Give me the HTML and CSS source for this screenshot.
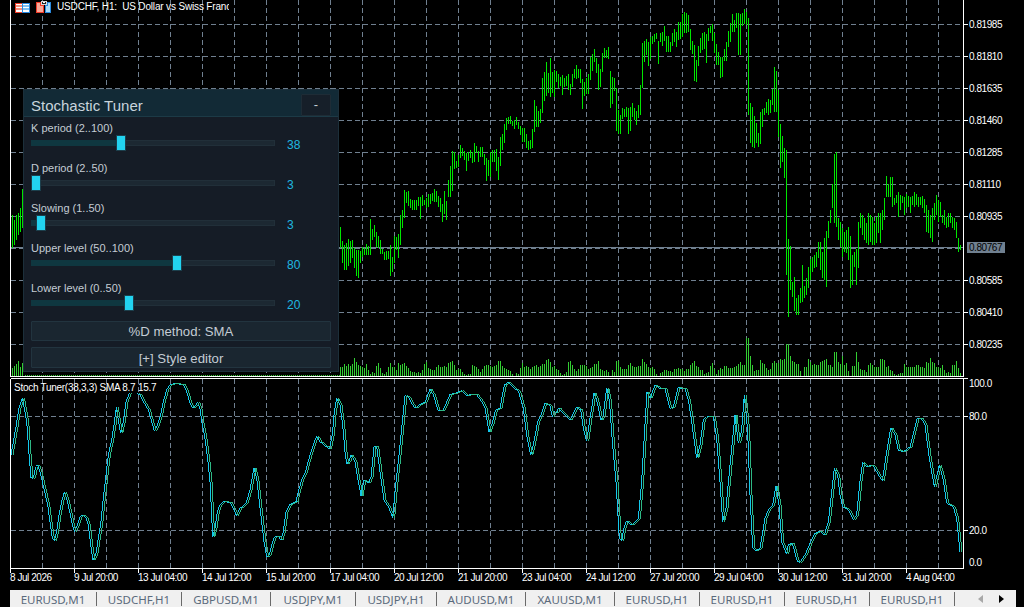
FILE: index.html
```html
<!DOCTYPE html>
<html lang="en">
<head>
<meta charset="utf-8">
<title>USDCHF,H1</title>
<link rel="stylesheet" href="styles.css">
</head>
<body>
<div class="terminal">
  <div class="chart">
    <svg class="chart-svg" width="1024" height="590" viewBox="0 0 1024 590" xmlns="http://www.w3.org/2000/svg">
      <defs>
        <clipPath id="title-clip"><rect x="50" y="0" width="179" height="16"/></clipPath>
        <g id="stoch">
          <path transform="matrix(.3333 0 0 .3333 0 375)" d="M33 240L40 200 48 155 57 100 67 68 73 100 80 140 87 235 93 308 100 310 107 275 113 270 120 290 127 320 135 355 143 390 150 440 157 490 163 497 170 470 178 415 185 380 193 352 200 370 208 405 215 440 223 470 232 450 240 425 248 420 258 430 265 450 272 510 279 555 287 540 295 490 303 440 310 370 318 300 325 240 335 195 342 150 349 97 355 135 362 175 370 140 378 80 388 55M412 55L420 60 430 80 445 105 455 140 463 168 472 150 482 120 490 80 500 45 510 30 522 26 550 28 560 50 570 85 578 100 587 92 593 80 600 100 607 150 615 190 623 250 630 320 635 420 638 487 645 460 652 410 660 390 670 380 690 382 700 400 709 422 720 400 738 385 750 345 762 278 770 310 778 380 785 440 792 500 800 545 808 540 815 510 823 487 835 483 843 495 850 470 858 410 868 390 888 380 895 350 905 315 915 295 930 240 942 205 950 183 960 200 975 212 988 222 997 180 1003 110 1010 70 1020 90"/>
          <path transform="matrix(.3333 0 0 .3333 340 375)" d="M0 90L8 150 15 230 20 268 28 255 33 240 45 260 55 320 63 362 72 315 85 325 93 305 102 215 110 215 120 290 132 375 145 395 158 428 165 350 175 260 185 160 195 62 205 65 215 85 225 100 240 88 255 82 270 42 280 60 295 108 310 105 330 58 345 55 365 47 380 62 395 58 410 60 425 80 435 100 447 172 458 140 467 105 480 100 493 30 505 22 520 38 535 48 550 100 560 180 572 240 582 200 593 140 605 115 615 85 630 92 637 125 643 108 650 115 655 98 670 115 690 135 710 95 722 105 730 160 740 198 750 130 762 55 770 75 783 135 790 120 800 38 808 75 818 210 828 320 838 490 845 497 852 460 860 437 875 450 885 440 895 430 905 320 915 150 921 50 930 70 945 30 960 40 975 42 990 100 1000 95 1015 35 1020 40"/>
          <path transform="matrix(.3333 0 0 .3333 680 375)" d="M0 40L15 42 25 75 35 140 50 250 60 210 70 135 80 125 100 125 110 190 120 320 128 440 138 400 150 270 165 120 175 205 185 165 193 60 203 170 210 360 218 520 228 528 240 520 255 430 265 405 278 390 288 332 297 390 305 500 320 538 325 508 337 505 352 560 360 562 375 540 390 505 405 475 420 468 433 480 445 440 463 280 473 300 480 360 488 395 505 405 520 435 530 420 540 320 548 262 560 275 578 270 590 290 607 318 620 230 632 158 645 180 655 225 670 230 690 215 700 175 712 130 725 132 735 150 748 250 763 335 778 270 790 315 800 385 820 395 830 430 840 530"/>
        </g>
      </defs>

      <!-- grid, main pane -->
      <path class="grid" d="M11 24.5H963M11 56.5H963M11 88.5H963M11 120.5H963M11 152.5H963M11 184.5H963M11 216.5H963M11 248.5H963M11 280.5H963M11 312.5H963M11 344.5H963"/>
      <path class="grid" d="M42.5 0V376M74.5 0V376M106.5 0V376M138.5 0V376M170.5 0V376M202.5 0V376M234.5 0V376M266.5 0V376M298.5 0V376M330.5 0V376M362.5 0V376M394.5 0V376M426.5 0V376M458.5 0V376M490.5 0V376M522.5 0V376M554.5 0V376M586.5 0V376M618.5 0V376M650.5 0V376M682.5 0V376M714.5 0V376M746.5 0V376M778.5 0V376M810.5 0V376M842.5 0V376M874.5 0V376M906.5 0V376M938.5 0V376"/>
      <path class="price-line" d="M11 247.5H963"/>

      <!-- volumes -->
      <g transform="translate(.5 0)">
        <path class="volume" d="M12 376v-8m2 8v-10m2 10v-12m2 12v-15m2 15v-9m2 9v-13"/>
        <path class="volume" d="M340 376v-9m2 9v-9m2 9v-12m2 12v-10m2 10v-12m2 12v-10m2 10v-12m2 12v-18m2 18v-14m2 14v-11m2 11v-10m2 10v-9m2 9v-8m2 8v-12m2 12v-6m2 6v-2m2 2v-4m2 4v-3m2 3v-10m2 10v-13m2 13v-8m2 8v-3m2 3v-2m2 2v-4m2 4v-9m2 9v-13m2 13v-9m2 9v-9m2 9v-6m2 6v-13m2 13v-11m2 11v-12m2 12v-13m2 13v-10m2 10v-8m2 8v-5m2 5v-4m2 4v-4m2 4v-3m2 3v-4m2 4v-3m2 3v-6m2 6v-12m2 12v-14m2 14v-8m2 8v-7m2 7v-6m2 6v-6m2 6v-9m2 9v-11m2 11v-9m2 9v-9m2 9v-10m2 10v-9m2 9v-13m2 13v-14m2 14v-15m2 15v-11m2 11v-6m2 6v-7m2 7v-7m2 7v-4m2 4v-2m2 2v-1m2 1v-2m2 2v-2m2 2v-11m2 11v-10m2 10v-9m2 9v-7m2 7v-4m2 4v-7m2 7v-10m2 10v-11m2 11v-11m2 11v-10m2 10v-9m2 9v-10m2 10v-11m2 11v-15m2 15v-15m2 15v-10m2 10v-8m2 8v-7m2 7v-6m2 6v-5m2 5v-2m4 2v-3m2 3v-2m2 2v-8m2 8v-13m2 13v-9m2 9v-10m2 10v-9m2 9v-7m2 7v-9m2 9v-10m2 10v-11m2 11v-9m2 9v-10m2 10v-12m2 12v-12m2 12v-16m2 16v-17m2 17v-14m2 14v-9m2 9v-10m2 10v-7m2 7v-6m2 6v-3m2 3v-1m2 1v-2m2 2v-4m2 4v-14m2 14v-15m2 15v-11m2 11v-7m2 7v-5m2 5v-7m2 7v-11m2 11v-11m2 11v-11m2 11v-10m2 10v-7m2 7v-8m2 8v-9m2 9v-12m2 12v-12m2 12v-15m2 15v-7m2 7v-6m2 6v-5m2 5v-6m2 6v-4m4 4v-6m2 6v-4m2 4v-15m2 15v-15m2 15v-9m2 9v-7m2 7v-7m2 7v-7m2 7v-11m2 11v-13m2 13v-10m2 10v-9m2 9v-9m2 9v-10m2 10v-10m2 10v-17m2 17v-14m2 14v-12m2 12v-9m2 9v-8m2 8v-9m2 9v-7m2 7v-2m4 2v-3m2 3v-4m2 4v-6m2 6v-6m2 6v-5m2 5v-5m2 5v-4m2 4v-7m2 7v-7m2 7v-8m2 8v-7m2 7v-7m2 7v-5m2 5v-7m2 7v-7m2 7v-11m2 11v-13m2 13v-15m2 15v-10m2 10v-9"/>
        <path class="volume" d="M700 376v-6m2 6v-6m2 6v-2m2 2v-3m2 3v-4m2 4v-10m2 10v-13m2 13v-7m2 7v-2m2 2v-6m2 6v-8m2 8v-7m2 7v-10m2 10v-10m2 10v-8m2 8v-8m2 8v-8m2 8v-9m2 9v-10m2 10v-12m2 12v-14m2 14v-11m2 11v-11m2 11v-38m2 38v-38m2 38v-20m2 20v-11m2 11v-5m2 5v-6m2 6v-6m2 6v-16m2 16v-13m2 13v-12m2 12v-8m2 8v-6m2 6v-7m2 7v-13m2 13v-15m2 15v-13m2 13v-13m2 13v-17m2 17v-16m2 16v-17m2 17v-32m2 32v-32m2 32v-20m2 20v-15m2 15v-14m2 14v-12m2 12v-12m2 12v-5m4 5v-9m2 9v-9m2 9v-17m2 17v-14m2 14v-11m2 11v-12m2 12v-11m2 11v-11m2 11v-14m2 14v-15m2 15v-16m2 16v-17m2 17v-11m2 11v-11m2 11v-9m2 9v-24m2 24v-24m2 24v-14m2 14v-12m2 12v-20m2 20v-11m2 11v-13m2 13v-5m4 5v-10m2 10v-10m2 10v-24m2 24v-14m2 14v-7m2 7v-6m2 6v-6m2 6v-4m2 4v-11m2 11v-13m2 13v-11m2 11v-9m2 9v-9m2 9v-9m2 9v-17m2 17v-17m2 17v-16m2 16v-9m2 9v-10m2 10v-6m2 6v-5m2 5v-2m2 2v-1m2 1v-2m2 2v-3m2 3v-3m2 3v-12m2 12v-9m2 9v-9m2 9v-9m2 9v-9m2 9v-9m2 9v-11m2 11v-11m2 11v-9m2 9v-9m2 9v-8m2 8v-14m2 14v-13m2 13v-18m2 18v-14m2 14v-13m2 13v-9m2 9v-9m2 9v-8m2 8v-11m2 11v-6m2 6v-3m2 3v-4m2 4v-3m2 3v-11m2 11v-11m2 11v-15m2 15v-8m2 8v-3"/>
        <path class="volume-tips" d="M339 375.5H24"/>

        <!-- price bars -->
        <path class="bars" d="M12 215V248M14 220V245M16 215V240M18 213V235M20 208V232M22 189V228
M340 227V248M342 241V263M344 245V270M346 243V270M348 239V266M350 241V263M352 240V258M354 248V268M356 250V276M358 250V278M360 251V263M362 247V257M364 248V255M366 244V255M368 246V255M370 219V255M372 229V240M374 225V237M376 232V247M378 236V248M380 240V254M382 249V254M384 252V260M386 251V260M388 251V259M390 245V276M392 257V272M394 236V263M396 237V250M398 234V258M400 215V245M402 210V228M404 190V218M406 192V203M408 191V206M410 199V208M412 200V210M414 200V210M416 200V210M418 197V206M420 197V219M422 195V206M424 200V205M426 198V208M428 194V207M430 194V204M432 193V201M434 189V202M436 191V202M438 196V207M440 198V212M442 204V222M444 191V214M446 201V220M448 180V197M450 166V197M452 151V191M454 152V169M456 161V168M458 155V167M460 145V158M462 148V156M464 151V160M466 153V171M468 152V161M470 150V158M472 152V163M474 143V162M476 146V153M478 151V162M480 147V157M482 147V157M484 154V165M486 158V181M488 160V176M490 152V177M492 150V162M494 150V162M496 149V171M498 157V180M500 137V166M502 134V150M504 124V143M506 118V130M508 117V124M510 116V124M512 121V126M514 120V129M516 117V125M518 122V129M520 126V135M522 128V142M524 128V142M526 134V148M528 141V150M530 140V149M532 129V148M534 100V132M536 106V127M538 111V127M540 109V123M542 78V113M544 72V101M546 62V96M548 73V93M550 58V97M552 72V93M554 70V97M556 71V82M558 74V88M560 77V86M562 75V95M564 78V87M566 76V86M568 74V90M570 84V95M572 74V87M574 69V78M576 65V79M578 69V78M580 69V83M582 79V109M584 82V96M586 78V94M588 74V94M590 57V80M592 54V71M594 49V62M596 58V73M598 64V90M600 69V87M602 53V72M604 48V58M606 50V58M608 47V59M610 71V108M612 77V104M614 78V91M616 88V131M618 110V134M620 115V134M622 108V119M624 109V117M626 107V117M628 108V134M630 107V131M632 103V117M634 108V120M636 111V125M638 105V118M640 85V115M642 43V88M644 41V62M646 39V55M648 42V66M650 37V59M652 36V44M654 34V42M656 33V39M658 41V64M660 33V42M662 32V46M664 26V41M666 36V52M668 36V52M670 42V52M672 33V46M674 29V42M676 32V47M678 22V40M680 22V39M682 14V37M684 12V33M686 13V33M688 15V32M690 29V50M692 41V54M694 45V81M696 60V82M698 46V66
M700 38V53M702 33V50M704 32V49M706 34V63M708 28V41M710 26V33M712 24V41M714 33V53M716 44V65M718 52V65M720 57V78M722 57V77M724 49V61M726 42V61M728 31V47M730 23V42M732 14V32M734 20V32M736 13V28M738 13V55M740 14V55M742 13V26M744 9V24M746 12V25M748 18V115M750 103V143M752 107V147M754 116V148M756 123V143M758 133V147M760 112V144M762 109V127M764 108V115M766 102V113M768 99V115M770 100V113M772 89V105M774 67V112M776 71V112M778 90V137M780 124V168M782 136V162M784 148V178M786 150V275M788 239V317M790 246V290M792 282V297M794 277V311M796 298V315M798 295V315M800 288V303M802 265V302M804 286V298M806 278V295M808 267V288M810 259V280M812 257V272M814 255V268M816 252V267M818 242V258M820 242V270M822 252V278M824 238V280M826 231V287M828 221V238M830 210V223M832 184V208M834 154V223M836 152V227M838 218V240M840 222V247M842 228V257M844 232V252M846 230V253M848 227V260M850 236V288M852 255V285M854 252V267M856 249V285M858 222V268M860 213V228M862 215V235M864 218V240M866 223V243M868 213V245M870 215V242M872 217V245M874 223V245M876 217V243M878 213V233M880 213V243M882 210V230M884 198V220M886 176V197M888 184V197M890 177V197M892 177V207M894 198V205M896 195V203M898 192V217M900 195V210M902 196V203M904 197V215M906 194V208M908 196V207M910 197V213M912 196V205M914 192V207M916 194V205M918 197V207M920 197V205M922 196V208M924 199V213M926 205V232M928 210V233M930 215V238M932 208V242M934 203V220M936 195V215M938 200V222M940 202V217M942 215V223M944 210V225M946 217V228M948 213V227M950 213V223M952 217V228M954 218V230M956 222V238M958 238V252M960 245V250"/>
      </g>

      <!-- grid and levels, indicator pane -->
      <path class="grid" d="M11 416.5H963M11 530.5H963"/>
      <path class="grid" d="M42.5 379V568M74.5 379V568M106.5 379V568M138.5 379V568M170.5 379V568M202.5 379V568M234.5 379V568M266.5 379V568M298.5 379V568M330.5 379V568M362.5 379V568M394.5 379V568M426.5 379V568M458.5 379V568M490.5 379V568M522.5 379V568M554.5 379V568M586.5 379V568M618.5 379V568M650.5 379V568M682.5 379V568M714.5 379V568M746.5 379V568M778.5 379V568M810.5 379V568M842.5 379V568M874.5 379V568M906.5 379V568M938.5 379V568"/>

      <use href="#stoch" class="stoch-k"/>
      <use href="#stoch" class="stoch-d" transform="translate(2 0)"/>

      <!-- frames and axis ticks -->
      <path class="frame" d="M10.5 0V376.5H963.5V0M10.5 378.5H968M10.5 378.5V568.5H963.5V378.5"/>
      <path class="frame" d="M964 24.5h4M964 56.5h4M964 88.5h4M964 120.5h4M964 152.5h4M964 184.5h4M964 216.5h4M964 280.5h4M964 312.5h4M964 344.5h4M964 416.5h4M964 530.5h4M74.5 568v5M138.5 568v5M202.5 568v5M266.5 568v5M330.5 568v5M394.5 568v5M458.5 568v5M522.5 568v5M586.5 568v5M650.5 568v5M714.5 568v5M778.5 568v5M842.5 568v5M906.5 568v5M10.5 568v5"/>

      <!-- header icons and symbol title -->
      <g class="icon-table">
        <path class="ic-red-cell" d="M15.5 3.5h7v9h-7z"/>
        <path class="ic-blue-cell" d="M22.5 3.5h7v9h-7z"/>
        <path class="ic-red-row" d="M16 5.5h6M16 8.5h6"/>
        <path class="ic-blue-row" d="M23 5.5h6M23 8.5h6"/>
      </g>
      <g class="icon-split">
        <path class="ic-red-fill" d="M36.5 2.5h4v3h3v7h-7z"/>
        <path class="ic-blue-fill" d="M45.5 5.5h2v-3h3v10h-5z"/>
        <path class="ic-white-stroke" d="M41.5 1.5h5v3h-5z"/>
        <path class="ic-dark" d="M43 2.5h2"/>
      </g>
      <text class="title-text" x="57" y="10" clip-path="url(#title-clip)">USDCHF, H1:  US Dollar vs Swiss Franc</text>

      <text class="axis" x="969" y="28">0.81985</text>
      <text class="axis" x="969" y="60">0.81810</text>
      <text class="axis" x="969" y="92">0.81635</text>
      <text class="axis" x="969" y="124">0.81460</text>
      <text class="axis" x="969" y="156">0.81285</text>
      <text class="axis" x="969" y="188">0.81110</text>
      <text class="axis" x="969" y="220">0.80935</text>
      <rect class="price-box" x="967" y="242" width="38" height="11"/>
      <text class="axis axis-dark" x="969" y="251">0.80767</text>
      <text class="axis" x="969" y="284">0.80585</text>
      <text class="axis" x="969" y="316">0.80410</text>
      <text class="axis" x="969" y="348">0.80235</text>
      <text class="axis" x="969" y="387">100.0</text>
      <text class="axis" x="969" y="420">80.0</text>
      <text class="axis" x="969" y="534">20.0</text>
      <text class="axis" x="969" y="566">0.0</text>

      <text class="sub-label" x="14" y="391">Stoch Tuner(38,3,3) SMA 8.7 15.7</text>

      <text class="axis" x="10" y="581">8 Jul 2026</text>
      <text class="axis" x="74" y="581">9 Jul 20:00</text>
      <text class="axis" x="138" y="581">13 Jul 04:00</text>
      <text class="axis" x="202" y="581">14 Jul 12:00</text>
      <text class="axis" x="266" y="581">15 Jul 20:00</text>
      <text class="axis" x="330" y="581">17 Jul 04:00</text>
      <text class="axis" x="394" y="581">20 Jul 12:00</text>
      <text class="axis" x="458" y="581">21 Jul 20:00</text>
      <text class="axis" x="522" y="581">23 Jul 04:00</text>
      <text class="axis" x="586" y="581">24 Jul 12:00</text>
      <text class="axis" x="650" y="581">27 Jul 20:00</text>
      <text class="axis" x="714" y="581">29 Jul 04:00</text>
      <text class="axis" x="778" y="581">30 Jul 12:00</text>
      <text class="axis" x="842" y="581">31 Jul 20:00</text>
      <text class="axis" x="906" y="581">4 Aug 04:00</text>
    </svg>

    <section class="panel">
      <header class="panel-head">
        <h1 class="panel-title">Stochastic Tuner</h1>
        <button class="collapse-btn">-</button>
      </header>
      <div class="panel-body">
        <div class="param">
          <div class="param-label">K period (2..100)</div>
          <div class="param-row">
            <div class="track"><div class="track-fill" style="width:90px"><span class="thumb"></span></div></div>
            <span class="param-value">38</span>
          </div>
        </div>
        <div class="param">
          <div class="param-label">D period (2..50)</div>
          <div class="param-row">
            <div class="track"><div class="track-fill" style="width:5px"><span class="thumb"></span></div></div>
            <span class="param-value">3</span>
          </div>
        </div>
        <div class="param">
          <div class="param-label">Slowing (1..50)</div>
          <div class="param-row">
            <div class="track"><div class="track-fill" style="width:10px"><span class="thumb"></span></div></div>
            <span class="param-value">3</span>
          </div>
        </div>
        <div class="param">
          <div class="param-label">Upper level (50..100)</div>
          <div class="param-row">
            <div class="track"><div class="track-fill" style="width:146px"><span class="thumb"></span></div></div>
            <span class="param-value">80</span>
          </div>
        </div>
        <div class="param">
          <div class="param-label">Lower level (0..50)</div>
          <div class="param-row">
            <div class="track"><div class="track-fill" style="width:98px"><span class="thumb"></span></div></div>
            <span class="param-value">20</span>
          </div>
        </div>
        <button class="wide-btn">%D method: SMA</button>
        <button class="wide-btn wide-btn-last">[+] Style editor</button>
      </div>
    </section>
  </div>

  <nav class="tabs">
    <span class="tab">EURUSD,M1</span>
    <span class="tab">USDCHF,H1</span>
    <span class="tab">GBPUSD,M1</span>
    <span class="tab">USDJPY,M1</span>
    <span class="tab">USDJPY,H1</span>
    <span class="tab">AUDUSD,M1</span>
    <span class="tab">XAUUSD,M1</span>
    <span class="tab">EURUSD,H1</span>
    <span class="tab">EURUSD,H1</span>
    <span class="tab">EURUSD,H1</span>
    <span class="tab">EURUSD,H1</span>
    <span class="tab-arrows">
      <svg class="arrow arrow-off" width="6" height="8" viewBox="0 0 6 8"><path d="M5 0V8L0 4z"/></svg>
      <svg class="arrow" width="6" height="8" viewBox="0 0 6 8"><path d="M1 0V8L6 4z"/></svg>
    </span>
  </nav>
</div>
</body>
</html>
```

FILE: styles.css
```css
* { box-sizing: border-box; }

html, body {
  margin: 0;
  padding: 0;
  background: #000;
}

.terminal {
  display: flex;
  flex-direction: column;
  width: 1024px;
  height: 607px;
  overflow: hidden;
  font-family: "Liberation Sans", Arial, sans-serif;
}

.chart {
  position: relative;
  height: 590px;
  flex: none;
}

.chart-svg { display: block; }

.grid {
  fill: none;
  stroke: #708090;
  stroke-width: 1;
  stroke-dasharray: 5 3;
  shape-rendering: crispEdges;
}

.price-line {
  fill: none;
  stroke: #708090;
  stroke-width: 1;
  shape-rendering: crispEdges;
}

.volume {
  fill: none;
  stroke: #32cd32;
  stroke-width: 1;
  shape-rendering: crispEdges;
}

.volume-tips {
  fill: none;
  stroke: #32cd32;
  stroke-width: 1;
  stroke-dasharray: 1 1;
  shape-rendering: crispEdges;
}

.bars {
  fill: none;
  stroke: #00e600;
  stroke-width: 1;
  shape-rendering: crispEdges;
}

.stoch-k, .stoch-d {
  fill: none;
  stroke-width: 3;
  shape-rendering: crispEdges;
}
.stoch-k { stroke: #14c8ec; }
.stoch-d { stroke: #2eb884; }

.frame {
  fill: none;
  stroke: #fff;
  stroke-width: 1;
  shape-rendering: crispEdges;
}

.ic-red-cell { fill: #fff; stroke: #f03c28; stroke-width: 1; shape-rendering: crispEdges; }
.ic-blue-cell { fill: #fff; stroke: #2a8ae0; stroke-width: 1; shape-rendering: crispEdges; }
.ic-red-row { fill: none; stroke: #f8907c; stroke-width: 2; shape-rendering: crispEdges; }
.ic-blue-row { fill: none; stroke: #7cc0f4; stroke-width: 2; shape-rendering: crispEdges; }
.ic-red-fill { fill: #f8a898; stroke: #f03c28; stroke-width: 1; shape-rendering: crispEdges; }
.ic-blue-fill { fill: #a8dcfa; stroke: #2a8ae0; stroke-width: 1; shape-rendering: crispEdges; }
.ic-white-stroke { fill: #222; stroke: #d8d8d8; stroke-width: 1; shape-rendering: crispEdges; }
.ic-dark { stroke: #fff; stroke-width: 1; fill: none; shape-rendering: crispEdges; }

.title-text {
  font-size: 10px;
  letter-spacing: -.16px;
  fill: #fff;
  white-space: pre;
}

.axis {
  font-size: 10px;
  letter-spacing: -.45px;
  fill: #fff;
}
.axis-dark { fill: #000; }

.price-box { fill: #708090; }

.sub-label {
  font-size: 10px;
  letter-spacing: -.28px;
  fill: #fff;
}

/* Tuner panel */
.panel {
  position: absolute;
  left: 23px;
  top: 89px;
  width: 316px;
  height: 283px;
  background: #151c26;
  border: 1px solid #1c2f3a;
  color: #c4ccd4;
}

.panel-head {
  display: flex;
  align-items: center;
  justify-content: space-between;
  height: 27px;
  padding: 3px 7px 0 7px;
  background: #122a36;
  border-bottom: 1px solid #1c3a46;
}

.panel-title {
  margin: 0;
  padding-top: 2px;
  font-size: 15px;
  font-weight: 400;
  color: #c8d4dc;
}

.collapse-btn {
  width: 30px;
  height: 22px;
  padding: 0;
  background: #161f29;
  border: 1px solid #1e2c36;
  border-radius: 1px;
  color: #c4ccd4;
  font: 13px "Liberation Sans", Arial, sans-serif;
}

.panel-body {
  padding: 4px 7px 0 7px;
}

.param {
  height: 40px;
}

.param-label {
  height: 14px;
  font-size: 11px;
  line-height: 14px;
}

.param-row {
  display: flex;
  align-items: center;
  height: 16px;
}

.track {
  width: 244px;
  height: 6px;
  background: #1c2832;
  border: 1px solid #212f39;
}

.track-fill {
  position: relative;
  height: 6px;
  margin: -1px;
  background: #0f3740;
}

.thumb {
  position: absolute;
  right: -5px;
  top: -5px;
  width: 10px;
  height: 16px;
  background: #22d3f0;
  border: 1px solid #1c3f4c;
}

.param-value {
  margin-left: 12px;
  padding-top: 4px;
  font-size: 12px;
  color: #1fb8e0;
}

.wide-btn {
  display: block;
  width: 300px;
  height: 20px;
  margin: 0 0 6px 0;
  padding: 0;
  background: #1a2630;
  border: 1px solid #22343f;
  border-radius: 1px;
  color: #c4ccd4;
  font: 13.2px "Liberation Sans", Arial, sans-serif;
}

.wide-btn-last {
  height: 21px;
  margin-bottom: 0;
  padding-top: 1px;
}

/* Tab strip */
.tabs {
  display: grid;
  grid-template-columns: 87px 85px 89px 85px 81px 89px 89px 85px 85px 85px 85px 1fr;
  align-items: center;
  height: 17px;
  margin: 0 8px 0 10px;
  background: #f0f0f0;
}

.tab {
  height: 14px;
  border-right: 1px solid #6a6a6a;
  color: #5a6a7c;
  font-family: "Noto Sans", sans-serif;
  font-size: 11.5px;
  line-height: 15px;
  text-align: center;
  white-space: nowrap;
}

.tab-arrows {
  display: flex;
  align-items: center;
  gap: 14px;
  margin-left: 23px;
}

.arrow { display: block; fill: #000; }
.arrow-off { fill: #a8a8a8; }
```
